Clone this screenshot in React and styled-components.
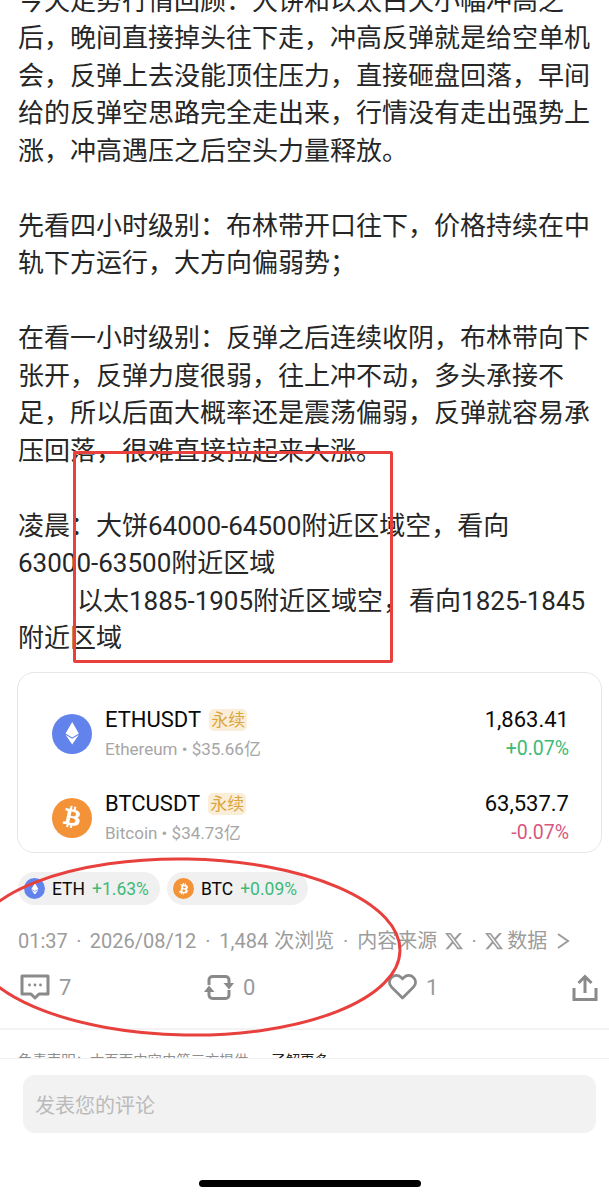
import React from "react";
import styled, { createGlobalStyle } from "styled-components";
import { FaBtc, FaEthereum, FaXTwitter } from "react-icons/fa6";

const GlobalStyle = createGlobalStyle`
  html, body {
    margin: 0;
    padding: 0;
    background: #fff;
  }
  body {
    font-family: Roboto, "Noto Sans CJK SC", sans-serif;
  }
`;

const Page = styled.div`
  position: relative;
  width: 609px;
  height: 1199px;
  overflow: hidden;
  background: #fff;
`;

const Article = styled.div`
  margin-top: -17.5px;
  padding: 0 18px;
  width: 573px;
  font-size: 26px;
  line-height: 37.5px;
  color: #262626;
`;

const Para = styled.p`
  margin: 0 0 37.5px;
  &:last-child {
    margin-bottom: 0;
  }
`;

const Indent = styled.span`
  display: inline-block;
  width: 59px;
`;

const Card = styled.div`
  margin: 14.5px 7px 0 17px;
  height: 181px;
  box-sizing: border-box;
  padding: 31.5px 32px 0 34px;
  border: 1px solid #e6e6e6;
  border-radius: 17px;
  display: flex;
  flex-direction: column;
  gap: 26px;
`;

const Row = styled.div`
  display: flex;
  align-items: center;
  gap: 13px;
  height: 58px;
`;

const Coin = styled.div`
  flex: none;
  width: ${p => p.size}px;
  height: ${p => p.size}px;
  border-radius: 50%;
  background: ${p => p.color};
  color: #fff;
  display: flex;
  align-items: center;
  justify-content: center;
  font-size: ${p => p.size * 0.56}px;
  svg {
    transform: rotate(${p => p.tilt || 0}deg);
  }
`;

const RowMain = styled.div`
  flex: 1;
  display: flex;
  flex-direction: column;
  gap: 4px;
`;

const NameLine = styled.div`
  display: flex;
  align-items: center;
  gap: 8px;
  font-size: 22px;
  line-height: 26px;
  color: #0a0a0a;
`;

const Badge = styled.span`
  font-size: 17px;
  line-height: 22px;
  padding: 0 2px;
  border-radius: 5px;
  background: #fbeed9;
  color: #dba63e;
`;

const SubLine = styled.div`
  font-size: 17px;
  line-height: 24px;
  color: #a6a6a6;
`;

const RowRight = styled.div`
  display: flex;
  flex-direction: column;
  align-items: flex-end;
  gap: 4px;
`;

const Price = styled.div`
  font-size: 22px;
  line-height: 26px;
  color: #0a0a0a;
`;

const Change = styled.div`
  font-size: 19.5px;
  line-height: 24px;
  color: ${p => (p.down ? "#d4587f" : "#3dba78")};
`;

const Pills = styled.div`
  display: flex;
  gap: 7px;
  margin: 19px 0 0 18px;
`;

const Pill = styled.div`
  height: 33px;
  display: flex;
  align-items: center;
  gap: 7px;
  padding: 0 11px 0 6px;
  border-radius: 17px;
  background: #f0f0f0;
  font-size: 17.5px;
  color: #0a0a0a;
`;

const Up = styled.span`
  color: #3dba78;
`;

const Meta = styled.div`
  margin: 22px 0 0 18px;
  font-size: 20px;
  line-height: 28px;
  color: #9c9c9c;
  white-space: nowrap;
  display: flex;
  align-items: center;
`;

const Sep = styled.span`
  width: ${p => p.w || 22}px;
  text-align: center;
`;

const XMark = styled.span`
  display: inline-flex;
  font-size: 20px;
  margin: 0 ${p => p.after || 0}px 0 ${p => p.before || 0}px;
`;

const Chevron = styled.svg`
  margin-left: 9px;
`;

const Actions = styled.div`
  margin: 18px 11px 0 20px;
  height: 28px;
  display: flex;
  align-items: center;
  justify-content: space-between;
`;

const Action = styled.div`
  width: 60px;
  display: flex;
  align-items: center;
  gap: 9px;
  font-size: 22px;
  color: #9a9a9a;
`;

const Divider = styled.div`
  margin-top: 27px;
  height: 2px;
  background: #f3f3f3;
`;

const Disclaimer = styled.div`
  margin: 21px 0 0 18px;
  font-size: 14.4px;
  line-height: 22px;
  color: #8e8e8e;
  white-space: nowrap;
`;

const More = styled.span`
  color: #222;
  margin-left: 23px;
`;

const CommentBar = styled.div`
  position: absolute;
  left: 0;
  right: 0;
  top: 1058px;
  bottom: 0;
  background: #fff;
  border-top: 1px solid #f0f0f0;
  padding: 16px 13px 0 23px;
`;

const CommentInput = styled.div`
  height: 58px;
  padding-left: 12px;
  border-radius: 12px;
  background: #f2f2f2;
  display: flex;
  align-items: center;
  font-size: 20px;
  color: #bababa;
`;

const HomeBar = styled.div`
  position: absolute;
  left: 199px;
  bottom: 12px;
  width: 222px;
  height: 7px;
  border-radius: 4px;
  background: #000;
`;

const RedBox = styled.div`
  position: absolute;
  left: 73px;
  top: 451px;
  width: 320px;
  height: 212px;
  box-sizing: border-box;
  border: 3px solid #e8403c;
  border-radius: 2px;
`;

const RedEllipse = styled.svg`
  position: absolute;
  left: 0;
  top: 0;
  pointer-events: none;
`;

const CommentIcon = () => (
  <svg width="30" height="26" viewBox="0 0 30 26" fill="none" stroke="#8a8a8a" strokeWidth="3">
    <path d="M2 2h26v18H19l-4 4-4-4H2z" strokeLinejoin="round" />
    <g fill="#8a8a8a" stroke="none">
      <circle cx="9.5" cy="11" r="1.4" />
      <circle cx="15" cy="11" r="1.4" />
      <circle cx="20.5" cy="11" r="1.4" />
    </g>
  </svg>
);

const RepostIcon = () => (
  <svg width="30" height="25" viewBox="0 0 30 25" fill="none" stroke="#8a8a8a" strokeWidth="3">
    <path d="M5 10V5a3.5 3.5 0 0 1 3.500-3.500h13A3.500 3.500 0 0 1 25 5v4" />
    <path d="M25 15v5a3.500 3.500 0 0 1-3.500 3.500h-13A3.500 3.500 0 0 1 5 20v-4" />
    <path d="M19.500 8H30l-5 6.500z" fill="#8a8a8a" stroke="none" />
    <path d="M0 17h10.500l-5.500-6.500z" fill="#8a8a8a" stroke="none" />
  </svg>
);

const HeartIcon = () => (
  <svg width="29" height="26" viewBox="0 0 29 26" fill="none" stroke="#8a8a8a" strokeWidth="2.8">
    <path d="M14.5 24 3.5 13a6.6 6.6 0 0 1 0-9.6 6.8 6.8 0 0 1 9.6 0l1.4 1.5 1.4-1.5a6.8 6.8 0 0 1 9.6 0 6.6 6.6 0 0 1 0 9.6z" strokeLinejoin="round" />
  </svg>
);

const ShareIcon = () => (
  <svg width="26" height="27" viewBox="0 0 26 27" fill="none" stroke="#8a8a8a" strokeWidth="3">
    <path d="M2 14v11.500h22V14" />
    <path d="M13 19V3M6.500 9 13 2.500 19.500 9" />
  </svg>
);

export default function App() {
  return (
    <Page>
      <GlobalStyle />
      <Article>
        <Para>
          今天走势行情回顾：大饼和以太白天小幅冲高之后，晚间直接掉头往下走，冲高反弹就是给空单机会，反弹上去没能顶住压力，直接砸盘回落，早间给的反弹空思路完全走出来，行情没有走出强势上涨，冲高遇压之后空头力量释放。
        </Para>
        <Para>先看四小时级别：布林带开口往下，价格持续在中轨下方运行，大方向偏弱势；</Para>
        <Para>
          在看一小时级别：反弹之后连续收阴，布林带向下张开，反弹力度很弱，往上冲不动，多头承接不足，所以后面大概率还是震荡偏弱，反弹就容易承压回落，很难直接拉起来大涨。
        </Para>
        <Para>
          凌晨：大饼64000-64500附近区域空，看向
          <br />
          63000-63500附近区域
          <br />
          <Indent />
          以太1885-1905附近区域空，看向1825-1845附近区域
        </Para>
      </Article>

      <Card>
        <Row>
          <Coin size={40} color="#6283ec">
            <FaEthereum />
          </Coin>
          <RowMain>
            <NameLine>
              ETHUSDT <Badge>永续</Badge>
            </NameLine>
            <SubLine>Ethereum • $35.66亿</SubLine>
          </RowMain>
          <RowRight>
            <Price>1,863.41</Price>
            <Change>+0.07%</Change>
          </RowRight>
        </Row>
        <Row>
          <Coin size={40} color="#f39237" tilt={12}>
            <FaBtc />
          </Coin>
          <RowMain>
            <NameLine>
              BTCUSDT <Badge>永续</Badge>
            </NameLine>
            <SubLine>Bitcoin • $34.73亿</SubLine>
          </RowMain>
          <RowRight>
            <Price>63,537.7</Price>
            <Change down>-0.07%</Change>
          </RowRight>
        </Row>
      </Card>

      <Pills>
        <Pill>
          <Coin size={21} color="#6283ec">
            <FaEthereum />
          </Coin>
          ETH <Up>+1.63%</Up>
        </Pill>
        <Pill>
          <Coin size={21} color="#f39237" tilt={12}>
            <FaBtc />
          </Coin>
          BTC <Up>+0.09%</Up>
        </Pill>
      </Pills>

      <Meta>
        01:37<Sep>·</Sep>2026/08/12<Sep w={23}>·</Sep>1,484<Sep w={6} />次浏览<Sep w={23}>·</Sep>内容来源
        <XMark before={7}>
          <FaXTwitter />
        </XMark>
        <Sep w={20}>·</Sep>
        <XMark after={3}>
          <FaXTwitter />
        </XMark>
        数据
        <Chevron width="14" height="18" viewBox="0 0 14 18" fill="none" stroke="#9c9c9c" strokeWidth="2">
          <path d="M2 2l10 7-10 7" />
        </Chevron>
      </Meta>

      <Actions>
        <Action>
          <CommentIcon />7
        </Action>
        <Action>
          <RepostIcon />0
        </Action>
        <Action>
          <HeartIcon />1
        </Action>
        <ShareIcon />
      </Actions>

      <Divider />
      <Disclaimer>
        免责声明：本页面内容由第三方提供
        <More>了解更多</More>
      </Disclaimer>

      <RedEllipse width="609" height="1199" viewBox="0 0 609 1199">
        <ellipse
          cx="186"
          cy="947"
          rx="214"
          ry="88"
          fill="none"
          stroke="#e8403c"
          strokeWidth="3"
          transform="rotate(1 186 947)"
        />
      </RedEllipse>

      <RedBox />

      <CommentBar>
        <CommentInput>发表您的评论</CommentInput>
      </CommentBar>
      <HomeBar />
    </Page>
  );
}
